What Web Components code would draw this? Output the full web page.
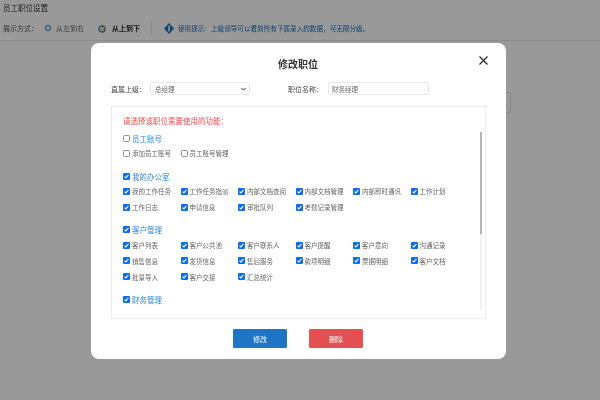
<!DOCTYPE html>
<html lang="zh"><head><meta charset="utf-8"><title>修改职位</title>
<style>
html,body{margin:0;padding:0;width:600px;height:400px;overflow:hidden;background:#fff;font-family:"Noto Sans CJK SC","Liberation Sans",sans-serif}
</style></head><body>
<staff-page></staff-page>
<modal-overlay>
  <edit-dialog>
    <perm-section title="员工账号" items="添加员工账号|员工账号管理" off></perm-section>
    <perm-section title="我的办公室" items="我的工作任务|工作任务指派|内部文档查阅|内部文档管理|内部即时通讯|工作计划|工作日志|申请信息|审批队列|考勤记录管理"></perm-section>
    <perm-section title="客户管理" items="客户列表|客户公共池|客户联系人|客户提醒|客户意向|沟通记录|销售信息|发货信息|售后服务|款项明细|票据明细|客户文档|批量导入|客户交接|汇总统计"></perm-section>
    <perm-section title="财务管理" items=""></perm-section>
  </edit-dialog>
</modal-overlay>
<script>
function def(name, html){
  customElements.define(name, class extends HTMLElement{
    connectedCallback(){
      if(this.shadowRoot) return;
      const r=this.attachShadow({mode:'open'});
      r.innerHTML=typeof html==='function'?html(this):html;
    }
  });
}
def('check-box',el=>{
  const on=!el.hasAttribute('off');
  return `<style>:host{display:inline-flex;width:7px;height:7px;flex:none}
  span{display:block;width:7px;height:7px;box-sizing:border-box;border-radius:1px;${on?'background:#0b6cf2':'background:#fff;border:1px solid #8f8f8f;border-radius:1.5px'}}
  svg{display:block;width:7px;height:7px}</style><span>${on?'<svg viewBox="0 0 7 7"><path d="M1.6 3.7 2.9 5 5.4 1.9" fill="none" stroke="#fff" stroke-width="1.15"/></svg>':''}</span>`;
});
def('perm-section',el=>{
  const off=el.hasAttribute('off')?' off':'';
  const items=(el.getAttribute('items')||'').split('|').filter(Boolean);
  return `<style>:host{display:block;margin-bottom:7.65px}
  .h{display:flex;align-items:center;gap:2px;height:14.5px;font-size:7.5px;color:#2f86d8}
  .g{display:grid;grid-template-columns:repeat(6,57.5px);grid-auto-rows:15.8px}
  .i{display:flex;align-items:center;gap:2px;font-size:6.5px;color:#666;white-space:nowrap}</style>
  <div class="h"><check-box${off}></check-box>${el.getAttribute('title')}</div>
  <div class="g">${items.map(t=>`<div class="i"><check-box${off}></check-box>${t}</div>`).join('')}</div>`;
});
def('staff-page',`<style>
:host{display:block;width:600px;height:400px;box-sizing:border-box;color:#333;font-size:7px;filter:blur(.3px)}
.t{height:16px;padding:0 3px;font-size:7.5px;line-height:15px}
.bar{display:flex;align-items:center;height:24px;padding:0 3px;border-bottom:1px solid #e6e6e6;box-sizing:content-box;margin-bottom:-2px}
.lab{width:42px;color:#555;white-space:nowrap}
.opt{display:flex;align-items:center;gap:5px;width:53px;color:#666;white-space:nowrap}
.opt.b{font-weight:700;color:#222;width:53px;gap:5px}
.ring{width:4px;height:4px;border:1.4px solid #1c74c4;border-radius:50%;flex:none}
.sep{width:1px;height:10px;background:#e2e2e2;margin-right:12px}
.tip{display:flex;align-items:center;gap:4px;color:#1c6fbd;font-size:6.6px;white-space:nowrap}
.box{width:14px;height:21px;margin:53px 0 0 497px;border:1px solid #ddd;border-radius:3px;background:#fff;box-sizing:border-box}
svg{display:block;flex:none}
</style>
<div class="t">员工职位设置</div>
<div class="bar">
<span class="lab">展示方式&#xFF1A;</span>
<span class="opt"><i class="ring"></i>从左到右</span>
<span class="opt b"><svg width="9" height="9" viewBox="0 0 9 9"><circle cx="4" cy="5" r="3" fill="none" stroke="#1c74c4" stroke-width="1.3"/><path d="M2.8 4.8 4 6 7.8 1" fill="none" stroke="#f0b400" stroke-width="1.2"/></svg>从上到下</span>
<i class="sep"></i>
<span class="tip"><svg width="10" height="11" viewBox="0 0 10 11"><path d="M5 0 10 5.5 5 11 0 5.5Z" fill="#1c74c4"/><rect x="4.3" y="2.6" width="1.6" height="5.8" fill="#fff"/></svg>使用提示&#xFF1A;上级领导可以看到所有下属录入的数据&#xFF0C;可无限分级。</span>
</div>
<div class="box"></div>`);
def('modal-overlay',`<style>:host{position:fixed;inset:0;background:rgba(0,0,0,.4);display:flex;align-items:flex-start;padding:43px 0 0 91px;box-sizing:border-box}</style><slot></slot>`);
def('edit-dialog',`<style>
:host{display:block;position:relative;width:415px;height:316px;background:#fff;border-radius:8px;box-sizing:border-box;padding:0 20px;color:#333;filter:blur(.3px)}
h2{margin:0;height:39px;line-height:41px;text-align:center;font-size:10px;font-weight:700;color:#333;padding-right:1px}
.close{position:absolute;left:388px;top:13px;width:9px;height:9px;display:block}
.form{display:flex;align-items:center;height:13px;font-size:7px;color:#444}
.form label{white-space:nowrap}
.f{box-sizing:border-box;height:13px;border:1px solid #e8e8e8;border-radius:2px;font-size:6.5px;color:#666;display:flex;align-items:center;padding-left:4px;margin-left:4px}
.sel{width:100px;justify-content:space-between;padding-right:3px;margin-right:38px}
.inp{width:101px;padding-left:3px;margin-left:5px}
.panel{position:relative;box-sizing:border-box;margin-top:11px;width:375px;height:213px;border:1px solid #ececec;padding:9px 11px 0;overflow:hidden}
.red{font-size:7.5px;color:#ee4b4b;height:14px;line-height:9px;margin-bottom:1px;white-space:nowrap}
.track{position:absolute;left:368px;top:25px;width:2px;height:178px;background:#f1f1f1}
.thumb{position:absolute;left:368px;top:25px;width:2px;height:102px;background:#b5b5b5}
.btns{display:flex;gap:22px;margin:10px 0 0 122px}
.btn{width:54px;height:19px;border-radius:1.5px;color:#fff;font-size:7px;display:flex;align-items:center;justify-content:center;box-sizing:border-box}
.a{background:#1f75c4}.d{background:#e55052}
</style>
<h2>修改职位</h2>
<svg class="close" viewBox="0 0 9 9"><path d="M.5.5 8.5 8.5M8.5.5.5 8.5" stroke="#222" stroke-width="1.1" fill="none"/></svg>
<div class="form"><label>直属上级&#xFF1A;</label><div class="f sel">总经理<svg width="5" height="4" viewBox="0 0 5 4"><path d="M.5 1 2.5 3 4.5 1" fill="none" stroke="#333" stroke-width="1"/></svg></div>
<label>职位名称&#xFF1A;</label><div class="f inp">财务经理</div></div>
<div class="panel"><div class="red">请选择该职位需要使用的功能&#xFF1A;</div><slot></slot><i class="track"></i><i class="thumb"></i></div>
<div class="btns"><div class="btn a">修改</div><div class="btn d">删除</div></div>`);
</script>
</body></html>
